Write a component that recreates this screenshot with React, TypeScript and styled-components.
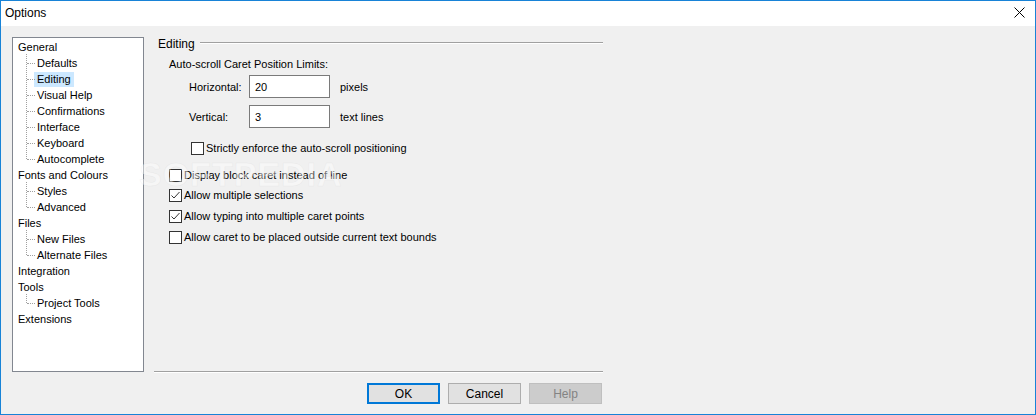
import React from 'react';
import styled, { createGlobalStyle } from 'styled-components';

const GlobalStyle = createGlobalStyle`
  body {
    margin: 0;
    font-family: 'Liberation Sans', Arial, sans-serif;
    font-size: 11px;
    color: #000;
  }
  * { box-sizing: border-box; }
`;

const Window = styled.div`
  position: relative;
  width: 1036px;
  height: 415px;
  border: 1px solid #1883d7;
  background: #f0f0f0;
  display: flex;
  flex-direction: column;
  overflow: hidden;
`;

const TitleBar = styled.div`
  height: 25px;
  background: #fff;
  display: flex;
  align-items: center;
  justify-content: space-between;
  padding: 0 0 2px 4px;
  font-size: 12px;
`;

const CloseGlyph = styled.span`
  display: flex;
  width: 11px;
  height: 11px;
  margin-right: 10px;
`;

const Body = styled.div`
  flex: 1;
  display: flex;
  padding: 11px 0 0 11px;
`;

const Tree = styled.div`
  width: 132px;
  height: 335px;
  padding-top: 1px;
  border: 1px solid #828790;
  background: #fff;
`;

const Row = styled.div<{ $child?: boolean; $last?: boolean }>`
  position: relative;
  height: 16px;
  display: flex;
  align-items: center;
  ${(p) =>
    p.$child &&
    `
    &::before {
      content: '';
      position: absolute;
      left: 13px;
      top: -1px;
      bottom: ${p.$last ? '50%' : '0'};
      border-left: 1px dotted #a0a0a0;
    }
    &::after {
      content: '';
      position: absolute;
      left: 14px;
      top: 50%;
      width: 8px;
      border-top: 1px dotted #a0a0a0;
    }
  `}
`;

const Label = styled.span<{ $child?: boolean; $selected?: boolean }>`
  margin-left: ${(p) => (p.$child ? '21px' : '2px')};
  padding: 0 3px;
  height: 15px;
  line-height: 15px;
  white-space: nowrap;
  background: ${(p) => (p.$selected ? '#cce8ff' : 'transparent')};
`;

const Panel = styled.div`
  margin-left: 10px;
  width: 449px;
  display: flex;
  flex-direction: column;
  padding-bottom: 10px;
`;

const GroupHeader = styled.div`
  display: flex;
  align-items: flex-start;
  height: 14px;
  padding-left: 4px;
  line-height: 14px;
  font-size: 12px;
`;

const HeaderRule = styled.div`
  flex: 1;
  margin: 5px 0 0 5px;
  border-top: 1px solid #a0a0a0;
  border-bottom: 1px solid #fff;
`;

const Caption = styled.div`
  margin-top: 6px;
  padding-left: 15px;
  line-height: 14px;
`;

const FieldRow = styled.div<{ $gap: number }>`
  display: flex;
  align-items: center;
  margin-top: ${(p) => p.$gap}px;
  padding-left: 35px;
  height: 23px;
`;

const FieldLabel = styled.span`
  width: 60px;
`;

const TextBox = styled.div`
  width: 81px;
  height: 23px;
  border: 1px solid #7a7a7a;
  background: #fff;
  padding-left: 5px;
  display: flex;
  align-items: center;
`;

const Suffix = styled.span`
  margin-left: 10px;
`;

const CheckRow = styled.div<{ $gap: number; $indent: number }>`
  display: flex;
  align-items: center;
  height: 16px;
  margin-top: ${(p) => p.$gap}px;
  padding-left: ${(p) => p.$indent}px;
`;

const Box = styled.span`
  width: 13px;
  height: 13px;
  border: 1px solid #333;
  background: #fff;
  margin-right: 2px;
  display: flex;
`;

const Separator = styled.div`
  margin-top: auto;
  border-top: 1px solid #a0a0a0;
  border-bottom: 1px solid #fff;
`;

const ButtonRow = styled.div`
  display: flex;
  justify-content: flex-end;
  gap: 8px;
  margin-top: 10px;
  padding-right: 1px;
`;

const Button = styled.div<{ $default?: boolean; $disabled?: boolean }>`
  width: 73px;
  height: 21px;
  display: flex;
  align-items: center;
  justify-content: center;
  font-size: 12px;
  background: ${(p) => (p.$disabled ? '#cccccc' : '#e1e1e1')};
  color: ${(p) => (p.$disabled ? '#838383' : '#000')};
  border: ${(p) =>
    p.$default ? '2px solid #0078d7' : p.$disabled ? '1px solid #bfbfbf' : '1px solid #adadad'};
`;

const Watermark = styled.span`
  position: absolute;
  left: 138px;
  top: 154px;
  font-size: 34px;
  font-weight: bold;
  letter-spacing: 1px;
  color: rgba(255, 255, 255, 0.45);
  -webkit-text-stroke: 0.5px rgba(200, 200, 200, 0.25);
  pointer-events: none;
`;

type Node = { label: string; children?: string[] };

const tree: Node[] = [
  {
    label: 'General',
    children: ['Defaults', 'Editing', 'Visual Help', 'Confirmations', 'Interface', 'Keyboard', 'Autocomplete'],
  },
  { label: 'Fonts and Colours', children: ['Styles', 'Advanced'] },
  { label: 'Files', children: ['New Files', 'Alternate Files'] },
  { label: 'Integration' },
  { label: 'Tools', children: ['Project Tools'] },
  { label: 'Extensions' },
];

const checks = [
  { text: 'Display block caret instead of line', checked: false, gap: 11 },
  { text: 'Allow multiple selections', checked: true, gap: 4 },
  { text: 'Allow typing into multiple caret points', checked: true, gap: 5 },
  { text: 'Allow caret to be placed outside current text bounds', checked: false, gap: 5 },
];

function CheckBox({ checked }: { checked: boolean }) {
  return (
    <Box>
      {checked && (
        <svg width="11" height="11" viewBox="0 0 11 11">
          <polyline points="1.5,5.5 4,8 9.5,2" fill="none" stroke="#333" strokeWidth="1" />
        </svg>
      )}
    </Box>
  );
}

export default function App() {
  return (
    <>
      <GlobalStyle />
      <Window>
        <TitleBar>
          <span>Options</span>
          <CloseGlyph>
            <svg width="11" height="11" viewBox="0 0 11 11">
              <path d="M0.5 0.5 L10.5 10.5 M10.5 0.5 L0.5 10.5" stroke="#000" strokeWidth="1" />
            </svg>
          </CloseGlyph>
        </TitleBar>
        <Body>
          <Tree>
            {tree.map((node) => (
              <React.Fragment key={node.label}>
                <Row>
                  <Label>{node.label}</Label>
                </Row>
                {node.children?.map((c, i) => (
                  <Row key={c} $child $last={i === node.children!.length - 1}>
                    <Label $child $selected={c === 'Editing'}>
                      {c}
                    </Label>
                  </Row>
                ))}
              </React.Fragment>
            ))}
          </Tree>
          <Panel>
            <GroupHeader>
              <span>Editing</span>
              <HeaderRule />
            </GroupHeader>
            <Caption>Auto-scroll Caret Position Limits:</Caption>
            <FieldRow $gap={4}>
              <FieldLabel>Horizontal:</FieldLabel>
              <TextBox>20</TextBox>
              <Suffix>pixels</Suffix>
            </FieldRow>
            <FieldRow $gap={7}>
              <FieldLabel>Vertical:</FieldLabel>
              <TextBox>3</TextBox>
              <Suffix>text lines</Suffix>
            </FieldRow>
            <CheckRow $gap={12} $indent={37}>
              <CheckBox checked={false} />
              Strictly enforce the auto-scroll positioning
            </CheckRow>
            {checks.map((c) => (
              <CheckRow key={c.text} $gap={c.gap} $indent={15}>
                <CheckBox checked={c.checked} />
                {c.text}
              </CheckRow>
            ))}
            <Separator />
            <ButtonRow>
              <Button $default>OK</Button>
              <Button>Cancel</Button>
              <Button $disabled>Help</Button>
            </ButtonRow>
          </Panel>
        </Body>
        <Watermark>SOFTPEDIA</Watermark>
      </Window>
    </>
  );
}
